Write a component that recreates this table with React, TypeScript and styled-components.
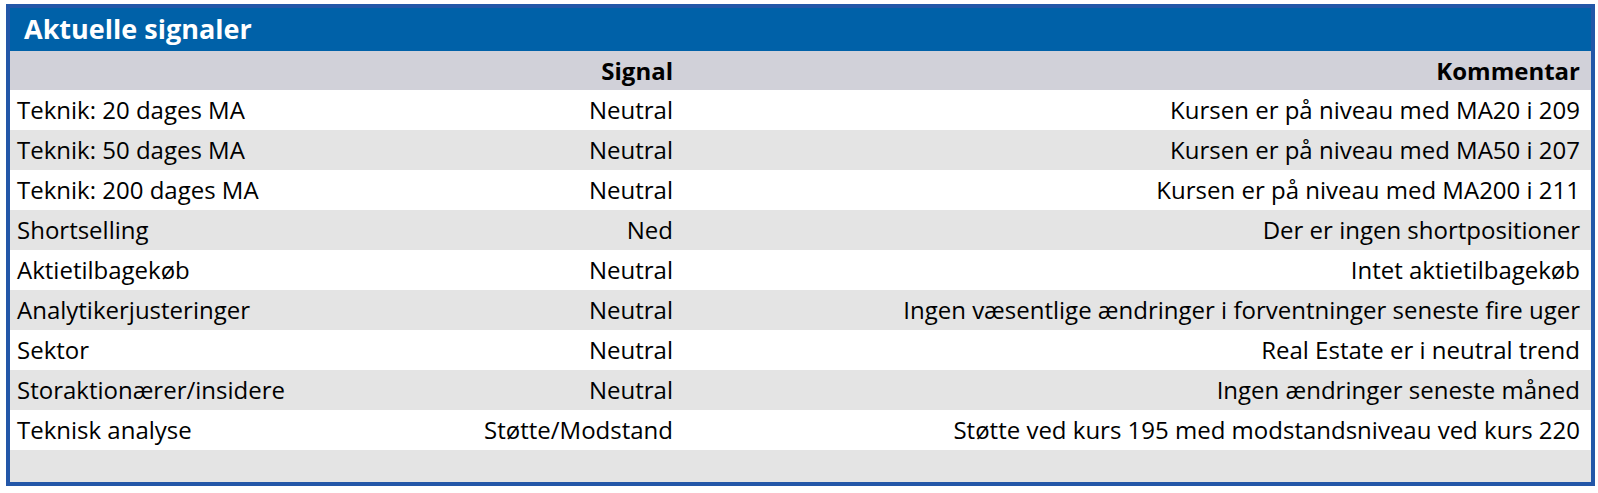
import React from "react";
import styled, { createGlobalStyle } from "styled-components";

const Global = createGlobalStyle`
  html, body { margin: 0; padding: 0; background: #ffffff; }
  body { font-family: "Open Sans", "Noto Sans", sans-serif; }
`;

const Page = styled.div`
  padding: 4px 3px 0 6px;
  width: 1598px;
  box-sizing: border-box;
`;

const Frame = styled.div`
  width: 1589px;
  box-sizing: border-box;
  border: 4px solid #2357a8;
  background: #e4e4e4;
  display: flex;
  flex-direction: column;
`;

const Title = styled.div`
  background: #0061a8;
  color: #ffffff;
  font-weight: 700;
  font-size: 27px;
  height: 43px;
  line-height: 42px;
  padding-left: 14px;
  white-space: nowrap;
`;

const Grid = styled.div`
  display: grid;
  grid-template-columns: 330px 341px 1fr;
`;

type Pos = "first" | "mid" | "last";

const Cell = styled.div<{ $bg: string; $pos: Pos; $bold?: boolean; $h: number }>`
  background: ${(p) => p.$bg};
  text-align: ${(p) => (p.$pos === "first" ? "left" : "right")};
  font-weight: ${(p) => (p.$bold ? 700 : 400)};
  height: ${(p) => p.$h}px;
  line-height: ${(p) => p.$h}px;
  font-size: 24px;
  color: #000000;
  white-space: nowrap;
  padding: ${(p) =>
    p.$pos === "first" ? "0 0 0 7px" : p.$pos === "mid" ? "0 8px 0 0" : "0 11px 0 0"};
`;

const rows: [string, string, string][] = [
  ["Teknik: 20 dages MA", "Neutral", "Kursen er på niveau med MA20 i 209"],
  ["Teknik: 50 dages MA", "Neutral", "Kursen er på niveau med MA50 i 207"],
  ["Teknik: 200 dages MA", "Neutral", "Kursen er på niveau med MA200 i 211"],
  ["Shortselling", "Ned", "Der er ingen shortpositioner"],
  ["Aktietilbagekøb", "Neutral", "Intet aktietilbagekøb"],
  ["Analytikerjusteringer", "Neutral", "Ingen væsentlige ændringer i forventninger seneste fire uger"],
  ["Sektor", "Neutral", "Real Estate er i neutral trend"],
  ["Storaktionærer/insidere", "Neutral", "Ingen ændringer seneste måned"],
  ["Teknisk analyse", "Støtte/Modstand", "Støtte ved kurs 195 med modstandsniveau ved kurs 220"],
];

export default function App() {
  return (
    <Page>
      <Global />
      <Frame>
        <Title>Aktuelle signaler</Title>
        <Grid>
          <Cell $bg="#d1d1d9" $pos="first" $h={39} />
          <Cell $bg="#d1d1d9" $pos="mid" $bold $h={39}>Signal</Cell>
          <Cell $bg="#d1d1d9" $pos="last" $bold $h={39}>Kommentar</Cell>
          {rows.map((r, i) => {
            const bg = i % 2 === 0 ? "#ffffff" : "#e4e4e4";
            return (
              <React.Fragment key={i}>
                <Cell $bg={bg} $pos="first" $h={40}>{r[0]}</Cell>
                <Cell $bg={bg} $pos="mid" $h={40}>{r[1]}</Cell>
                <Cell $bg={bg} $pos="last" $h={40}>{r[2]}</Cell>
              </React.Fragment>
            );
          })}
          <Cell $bg="#e4e4e4" $pos="first" $h={32} />
          <Cell $bg="#e4e4e4" $pos="mid" $h={32} />
          <Cell $bg="#e4e4e4" $pos="last" $h={32} />
        </Grid>
      </Frame>
    </Page>
  );
}
